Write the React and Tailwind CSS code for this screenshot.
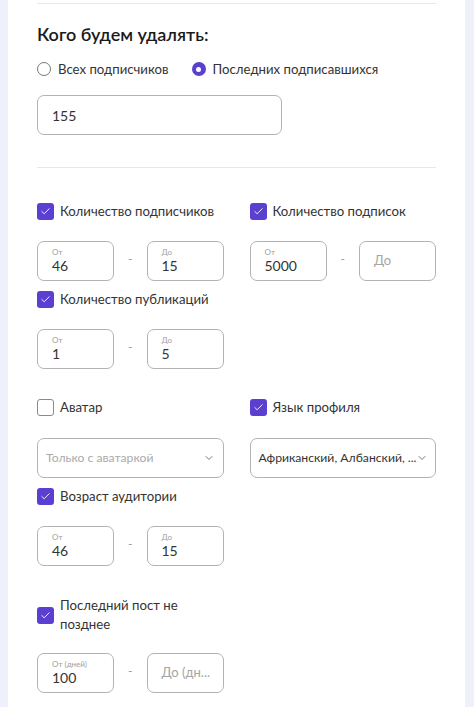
import { Check, ChevronDown } from "lucide-react";

const font = { fontFamily: 'Lato, Roboto, "Open Sans", sans-serif' };

function Box({ checked }) {
  return checked ? (
    <span className="flex h-[17px] w-[17px] shrink-0 items-center justify-center rounded-[3px] bg-[#5b3fd1]">
      <Check size={11} strokeWidth={2} className="text-white" />
    </span>
  ) : (
    <span className="h-[17px] w-[17px] shrink-0 rounded-[3px] border border-[#8a8a8a] bg-white" />
  );
}

function CheckRow({ checked = true, children }) {
  return (
    <label className="flex items-center gap-[6px] whitespace-nowrap text-[13.2px] leading-[20px] text-[#333]">
      <Box checked={checked} />
      <span>{children}</span>
    </label>
  );
}

function Field({ label, value, placeholder }) {
  return (
    <div className="flex h-[40px] w-[77px] flex-col justify-center rounded-[7px] border border-[#b3b3b3] bg-white px-[14px]">
      {value ? (
        <>
          <span className="whitespace-nowrap text-[8px] leading-[10px] text-[#a0a0a0]">{label}</span>
          <span className="text-[14px] leading-[18px] text-[#333]">{value}</span>
        </>
      ) : (
        <span className="whitespace-nowrap text-[13px] text-[#a5a5a5]">{placeholder}</span>
      )}
    </div>
  );
}

function Range({ from, to, fromLabel = "От", toPh = "До" }) {
  return (
    <div className="flex items-center justify-between">
      <Field label={fromLabel} value={from} placeholder={fromLabel} />
      <span className="-mt-[4px] text-[12px] text-[#999]">-</span>
      <Field label="До" value={to} placeholder={toPh} />
    </div>
  );
}

function Select({ text, muted }) {
  return (
    <div className="flex h-[40px] items-center justify-between rounded-[7px] border border-[#b3b3b3] bg-white pl-[8px] pr-[8px]">
      <span className={`whitespace-nowrap text-[12.2px] ${muted ? "text-[#aaa]" : "text-[#333]"}`}>{text}</span>
      <ChevronDown size={12} strokeWidth={1.6} className="shrink-0 text-[#555]" />
    </div>
  );
}

export default function App() {
  return (
    <div className="min-h-[707px] bg-[#eef1fc]" style={font}>
      <div className="ml-[8px] mr-[9px] min-h-[707px] bg-white px-[29px] pt-[3px]">
        <div className="h-px bg-[#e6e8f0]" />

        <h2 className="mt-[18px] text-[18px] font-semibold leading-[24px] text-[#1a1a1a]">Кого будем удалять:</h2>

        <div className="mt-[13px] flex items-center whitespace-nowrap text-[13.2px] leading-[20px] text-[#333]">
          <label className="flex items-center gap-[7px]">
            <span className="h-[14px] w-[14px] rounded-full border border-[#777]" />
            Всех подписчиков
          </label>
          <label className="ml-[23px] flex items-center gap-[7px]">
            <span className="flex h-[14px] w-[14px] items-center justify-center rounded-full bg-[#5b3fd1]">
              <span className="h-[5px] w-[5px] rounded-full bg-white" />
            </span>
            Последних подписавшихся
          </label>
        </div>

        <div className="mt-[16px] flex h-[40px] w-[245px] items-center rounded-[7px] border border-[#b3b3b3] px-[14px] text-[14px] text-[#333]">
          155
        </div>

        <div className="mt-[32px] h-px bg-[#e6e8f0]" />

        <div className="mt-[33px] grid grid-cols-2 gap-x-[26px] gap-y-[8px]">
          <div>
            <CheckRow>Количество подписчиков</CheckRow>
            <div className="mt-[20px]"><Range from="46" to="15" /></div>
          </div>
          <div>
            <CheckRow>Количество подписок</CheckRow>
            <div className="mt-[20px]"><Range from="5000" /></div>
          </div>
          <div>
            <CheckRow>Количество публикаций</CheckRow>
            <div className="mt-[20px]"><Range from="1" to="5" /></div>
          </div>
        </div>

        <div className="mt-[28px] grid grid-cols-2 gap-x-[26px] gap-y-[8px]">
          <div>
            <CheckRow checked={false}>Аватар</CheckRow>
            <div className="mt-[21px]"><Select text="Только с аватаркой" muted /></div>
          </div>
          <div>
            <CheckRow>Язык профиля</CheckRow>
            <div className="mt-[21px]"><Select text="Африканский, Албанский, ..." /></div>
          </div>
          <div>
            <CheckRow>Возраст аудитории</CheckRow>
            <div className="mt-[20px]"><Range from="46" to="15" /></div>
          </div>
        </div>

        <div className="mt-[30px] grid grid-cols-2 gap-x-[26px]">
          <div>
            <label className="flex items-center gap-[6px] text-[13.2px] leading-[19px] text-[#333]">
              <Box checked />
              <span className="w-[150px]">Последний пост не позднее</span>
            </label>
            <div className="mt-[19px]"><Range from="100" fromLabel="От (дней)" toPh="До (дн..." /></div>
          </div>
        </div>
      </div>
    </div>
  );
}
